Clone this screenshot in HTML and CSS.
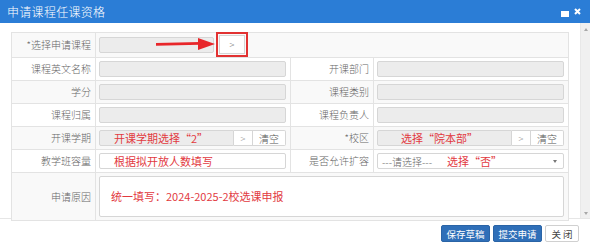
FILE: index.html
```html
<!DOCTYPE html>
<html lang="zh-CN">
<head>
<meta charset="utf-8">
<title>申请课程任课资格</title>
<link rel="stylesheet" href="styles.css">
</head>
<body>
<div class="dialog">
  <div class="titlebar">
    <span class="title">申请课程任课资格</span>
    <span class="tools">
      <svg class="max" width="8" height="6" viewBox="0 0 8 6"><rect x="0.5" y="0.5" width="7" height="5" fill="#fff" stroke="#fff"/></svg>
      <svg class="close" width="7" height="7" viewBox="0 0 7 7"><path d="M1 1L6 6M6 1L1 6" stroke="#fff" stroke-width="2"/></svg>
    </span>
  </div>
  <div class="body">
    <div class="content">
      <table class="form">
        <colgroup><col class="c1"><col class="c2"><col class="c3"><col class="c4"></colgroup>
        <tr class="odd">
          <td class="lbl">*选择申请课程</td>
          <td colspan="3" class="val">
            <div class="pick">
              <span class="inp ro short"></span>
              <span class="hlbox"><span class="btn">&gt;</span></span>
              <svg class="arrow" width="60" height="14" viewBox="0 0 60 14"><path d="M0 7.4L44 6.4" stroke="#e8262a" stroke-width="2.6"/><path d="M42 1L59 7L42 13Z" fill="#e8262a"/></svg>
            </div>
          </td>
        </tr>
        <tr>
          <td class="lbl">课程英文名称</td><td class="val"><span class="inp ro"></span></td>
          <td class="lbl">开课部门</td><td class="val"><span class="inp ro"></span></td>
        </tr>
        <tr class="odd">
          <td class="lbl">学分</td><td class="val"><span class="inp ro"></span></td>
          <td class="lbl">课程类别</td><td class="val"><span class="inp ro"></span></td>
        </tr>
        <tr>
          <td class="lbl">课程归属</td><td class="val"><span class="inp ro"></span></td>
          <td class="lbl">课程负责人</td><td class="val"><span class="inp ro"></span></td>
        </tr>
        <tr class="odd">
          <td class="lbl">开课学期</td>
          <td class="val"><div class="group"><span class="inp ro grow note">开课学期选择“2”</span><span class="gbtn arrowbtn">&gt;</span><span class="gbtn">清空</span></div></td>
          <td class="lbl">*校区</td>
          <td class="val"><div class="group"><span class="inp ro grow note campus">选择“院本部”</span><span class="gbtn arrowbtn">&gt;</span><span class="gbtn">清空</span></div></td>
        </tr>
        <tr>
          <td class="lbl">教学班容量</td><td class="val"><span class="inp note">根据拟开放人数填写</span></td>
          <td class="lbl">是否允许扩容</td>
          <td class="val"><div class="inp select"><span class="ph">---请选择---</span><span class="note2">选择“否”</span><span class="caret"></span></div></td>
        </tr>
        <tr class="odd tall">
          <td class="lbl">申请原因</td>
          <td colspan="3" class="val"><div class="textarea"><span class="note big">统一填写：2024-2025-2校选课申报</span></div></td>
        </tr>
      </table>
    </div>
    <div class="scrollbar"><span class="up"></span><span class="down"></span></div>
  </div>
  <div class="footer">
    <span class="fbtn primary">保存草稿</span>
    <span class="fbtn primary">提交申请</span>
    <span class="fbtn plain">关 闭</span>
  </div>
</div>
</body>
</html>
```

FILE: styles.css
```css
* { box-sizing: border-box; }
html, body { margin: 0; padding: 0; background: #fff; }
body {
  font-family: "Noto Sans CJK SC", "Noto Sans", sans-serif;
  width: 590px;
  height: 247px;
  overflow: hidden;
}
.dialog { width: 590px; height: 247px; display: flex; flex-direction: column; }

.titlebar {
  height: 23px;
  background: #2b7dd6;
  color: #fff;
  display: flex;
  align-items: center;
  justify-content: space-between;
  padding: 0 9px 0 7px;
  flex: none;
}
.title { font-size: 12px; line-height: 14px; letter-spacing: 0.3px; font-weight: 300; }
.tools { display: flex; align-items: center; gap: 5px; }
.tools .max { margin-top: 4px; }
.tools .close { margin-top: -1px; }

.body { height: 196px; display: flex; flex: none; border-bottom: 1px solid #e6e6e6; }
.content { flex: 1; padding: 9px 0 0 11px; }
.scrollbar {
  width: 10px;
  background: #f0f0f0;
  border-left: 1px solid #e8e8e8;
  display: flex;
  flex-direction: column;
  justify-content: space-between;
  align-items: center;
  padding: 5px 0 3px;
}
.scrollbar .up { width: 0; height: 0; border-left: 2.5px solid transparent; border-right: 2.5px solid transparent; border-bottom: 3px solid #a8a8a8; }
.scrollbar .down { width: 0; height: 0; border-left: 2.5px solid transparent; border-right: 2.5px solid transparent; border-top: 3px solid #a8a8a8; }

.form {
  border-collapse: collapse;
  table-layout: fixed;
  width: 557px;
  font-size: 10px;
  color: #666;
  font-weight: 300;
}
.c1 { width: 84px; } .c2 { width: 195px; } .c3 { width: 83px; } .c4 { width: 195px; }
.form td { border: 1px solid #e3e3e3; height: 22px; padding: 0; vertical-align: middle; }
.form tr.odd td { background: #f9f9f9; }
.form tr.tall td { height: 48px; }
.lbl { text-align: right; padding-right: 4px !important; white-space: nowrap; line-height: 12px; }
.val { padding: 3px 4px 3px 3px !important; }

.inp {
  display: flex;
  align-items: center;
  height: 16px;
  border: 1px solid #d6d6d6;
  border-radius: 2px;
  background: #fff;
  width: 100%;
}
.inp.ro { background: #ececec; }
.inp.short { width: 115px; flex: none; }

.pick { display: flex; align-items: center; gap: 2px; position: relative; }
.hlbox {
  display: flex;
  border: 2px solid #e23232;
  padding: 1px;
  margin: -4px 0 -3px;
}
.btn {
  width: 26px; height: 19px;
  border: 1px solid #d6d6d6;
  background: #fff;
  display: flex; align-items: center; justify-content: center;
  font-size: 9px; color: #666;
}
.arrow { position: absolute; left: 57px; top: 1px; }

.group { display: flex; height: 16px; }
.group .grow { flex: 1; border-radius: 2px 0 0 2px; }
.gbtn {
  display: flex; align-items: center; justify-content: center;
  border: 1px solid #d6d6d6; border-left: none;
  background: #fff; font-size: 10px; color: #555;
  padding: 0 5px; height: 16px;
}
.gbtn.arrowbtn { width: 19px; padding: 0; color: #888; font-size: 9px; }
.gbtn:last-child { border-radius: 0 2px 2px 0; width: 33px; }

.note { color: #e23a3f; font-size: 11px; padding-left: 14px; line-height: 13px; font-weight: 400; }
.campus { padding-left: 23px; }
.select { position: relative; padding-left: 4px; color: #666; font-size: 10px; }
.select .ph { width: 65px; }
.note2 { color: #e23a3f; font-size: 11px; font-weight: 400; }
.caret {
  position: absolute; right: 6px; top: 6px;
  border-left: 2.5px solid transparent; border-right: 2.5px solid transparent; border-top: 3px solid #777;
}
.textarea {
  height: 41px;
  border: 1px solid #d6d6d6;
  border-radius: 2px;
  background: #fff;
  display: flex; align-items: center;
}
.textarea .note { font-size: 11px; padding-left: 11px; }

.footer {
  flex: 1;
  display: flex;
  justify-content: flex-end;
  align-items: flex-start;
  gap: 3px;
  padding: 6px 11px 0 0;
}
.fbtn {
  height: 17px;
  font-size: 9.5px;
  display: flex; align-items: center; justify-content: center;
  border-radius: 2px;
}
.fbtn.primary { width: 49px; background: #2f6fb8; color: #fff; border: 1px solid #2a64a6; }
.fbtn.plain { width: 34px; background: #fff; color: #444; border: 1px solid #d0d0d0; }
```
